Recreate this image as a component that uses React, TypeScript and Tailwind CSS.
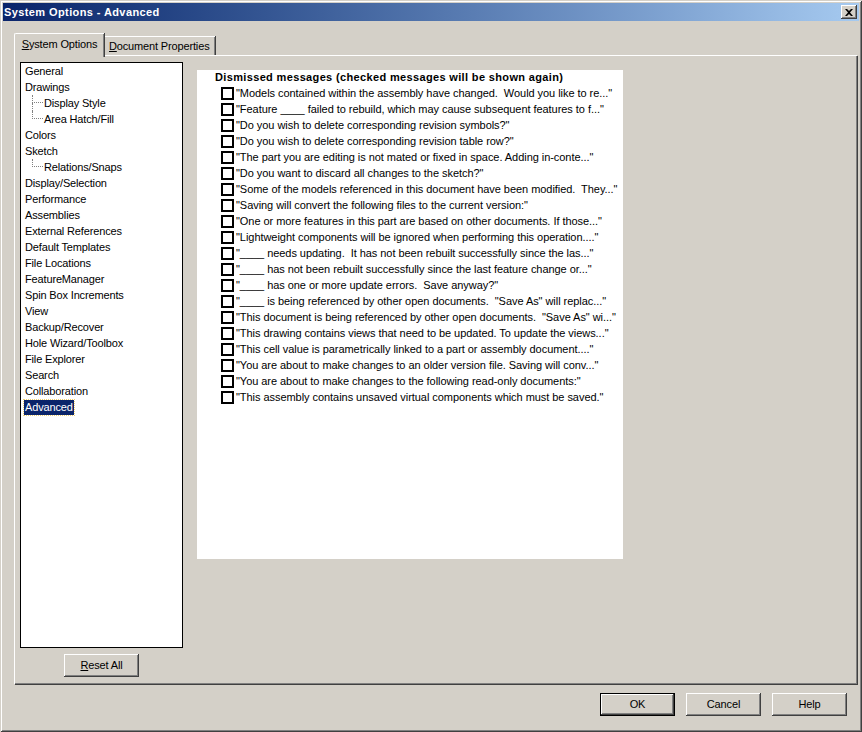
import React from "react";

const TREE: { label: string; child?: boolean; last?: boolean }[] = [
  { label: "General" },
  { label: "Drawings" },
  { label: "Display Style", child: true },
  { label: "Area Hatch/Fill", child: true, last: true },
  { label: "Colors" },
  { label: "Sketch" },
  { label: "Relations/Snaps", child: true, last: true },
  { label: "Display/Selection" },
  { label: "Performance" },
  { label: "Assemblies" },
  { label: "External References" },
  { label: "Default Templates" },
  { label: "File Locations" },
  { label: "FeatureManager" },
  { label: "Spin Box Increments" },
  { label: "View" },
  { label: "Backup/Recover" },
  { label: "Hole Wizard/Toolbox" },
  { label: "File Explorer" },
  { label: "Search" },
  { label: "Collaboration" },
  { label: "Advanced" },
];

const MESSAGES = [
  '"Models contained within the assembly have changed.  Would you like to re..."',
  '"Feature ____ failed to rebuild, which may cause subsequent features to f..."',
  '"Do you wish to delete corresponding revision symbols?"',
  '"Do you wish to delete corresponding revision table row?"',
  '"The part you are editing is not mated or fixed in space. Adding in-conte..."',
  '"Do you want to discard all changes to the sketch?"',
  '"Some of the models referenced in this document have been modified.  They..."',
  '"Saving will convert the following files to the current version:"',
  '"One or more features in this part are based on other documents. If those..."',
  '"Lightweight components will be ignored when performing this operation...."',
  '"____ needs updating.  It has not been rebuilt successfully since the las..."',
  '"____ has not been rebuilt successfully since the last feature change or..."',
  '"____ has one or more update errors.  Save anyway?"',
  '"____ is being referenced by other open documents.  "Save As" will replac..."',
  '"This document is being referenced by other open documents.  "Save As" wi..."',
  '"This drawing contains views that need to be updated. To update the views..."',
  '"This cell value is parametrically linked to a part or assembly document...."',
  '"You are about to make changes to an older version file. Saving will conv..."',
  '"You are about to make changes to the following read-only documents:"',
  '"This assembly contains unsaved virtual components which must be saved."',
];

const bevel =
  "shadow-[inset_-1px_-1px_#404040,inset_1px_1px_#ffffff,inset_-2px_-2px_#808080,inset_2px_2px_#d4d0c8]";

function Button({
  children,
  isDefault,
}: {
  children: React.ReactNode;
  isDefault?: boolean;
}) {
  return (
    <div
      className={`w-[75px] h-[23px] bg-[#d4d0c8] flex items-center justify-center ${
        isDefault ? "border border-black" : ""
      }`}
    >
      <div
        className={`w-full h-full flex items-center justify-center ${bevel}`}
      >
        {children}
      </div>
    </div>
  );
}

export default function App() {
  return (
    <div
      className={`w-[862px] h-[732px] bg-[#d4d0c8] p-[3px] flex flex-col text-black text-[11px] tracking-[-0.15px] font-['Liberation_Sans','Arial',sans-serif] shadow-[inset_1px_1px_#d4d0c8,inset_-1px_-1px_#404040,inset_2px_2px_#ffffff,inset_-2px_-2px_#808080]`}
    >
      {/* title bar */}
      <div className="h-[18px] flex items-center justify-between bg-gradient-to-r from-[#0a246a] to-[#a6caf0] pl-[1px] pr-[2px]">
        <span className="text-white font-bold tracking-[0.4px] text-[11px] leading-none">
          System Options - Advanced
        </span>
        <div
          className={`w-[16px] h-[14px] bg-[#d4d0c8] flex items-center justify-center ${bevel}`}
        >
          <svg width="8" height="7" viewBox="0 0 8 7">
            <path
              d="M0 0h2l2 2 2-2h2L5 3.5 8 7H6L4 5 2 7H0l3-3.5z"
              fill="#000"
            />
          </svg>
        </div>
      </div>

      {/* tabs */}
      <div className="mt-[12px] ml-[11px] flex items-end h-[22px]">
        <div className="relative z-10 h-[24px] -mb-[2px] w-[90px] bg-[#d4d0c8] border-l border-t border-white rounded-tl-[2px] shadow-[inset_-1px_0_#808080,1px_0_#404040] flex items-start justify-center pt-[2px]">
          <span>
            <span className="underline">S</span>ystem Options
          </span>
        </div>
        <div className="h-[19px] w-[110px] border-t border-white shadow-[inset_-1px_0_#808080,1px_0_#404040] flex items-start pl-[4px] pt-[1px] ml-[1px]">
          <span>
            <span className="underline">D</span>ocument Properties
          </span>
        </div>
      </div>

      {/* panel */}
      <div className="ml-[11px] w-[843px] h-[629px] border-l border-t border-white shadow-[inset_-1px_-1px_#808080,1px_1px_#404040] pl-[5px] pt-[6px] flex">
        <div className="flex flex-col items-center w-[163px]">
          <div className="w-[163px] h-[586px] bg-white border border-black pl-[4px]">
            {TREE.map((t) => (
              <div key={t.label} className="h-[16px] flex items-center">
                {t.child && (
                  <div className="flex flex-col w-[11px] h-[16px] ml-[7px] mr-[1px]">
                    <div className="h-[8px] border-l border-b border-dotted border-[#808080]" />
                    <div
                      className={`h-[8px] ${
                        t.last ? "" : "border-l border-dotted border-[#808080]"
                      }`}
                    />
                  </div>
                )}
                {t.label === "Advanced" ? (
                  <span className="bg-[#0a246a] text-white h-[15px] leading-[15px] px-[1px] outline-1 outline-dotted outline-[#f0d070] -ml-[1px]">
                    {t.label}
                  </span>
                ) : (
                  <span className="leading-[16px]">{t.label}</span>
                )}
              </div>
            ))}
          </div>
          <div className="mt-[6px]">
            <Button>
              <span>
                <span className="underline">R</span>eset All
              </span>
            </Button>
          </div>
        </div>

        <div className="ml-[14px] mt-[8px] w-[426px] h-[489px] bg-white pl-[18px]">
          <div className="h-[15px] leading-[15px] font-bold tracking-[0.35px]">
            Dismissed messages (checked messages will be shown again)
          </div>
          {MESSAGES.map((m) => (
            <div key={m} className="h-[16px] flex items-center pl-[6px]">
              <div className="w-[13px] h-[13px] border-2 border-black bg-white shrink-0" />
              <span className="ml-[2px] whitespace-pre leading-[16px] tracking-[-0.05px]">
                {m}
              </span>
            </div>
          ))}
        </div>
      </div>

      {/* footer buttons */}
      <div className="mt-[9px] flex justify-end gap-[11px] pr-[12px]">
        <Button isDefault>OK</Button>
        <Button>Cancel</Button>
        <Button>Help</Button>
      </div>
    </div>
  );
}
